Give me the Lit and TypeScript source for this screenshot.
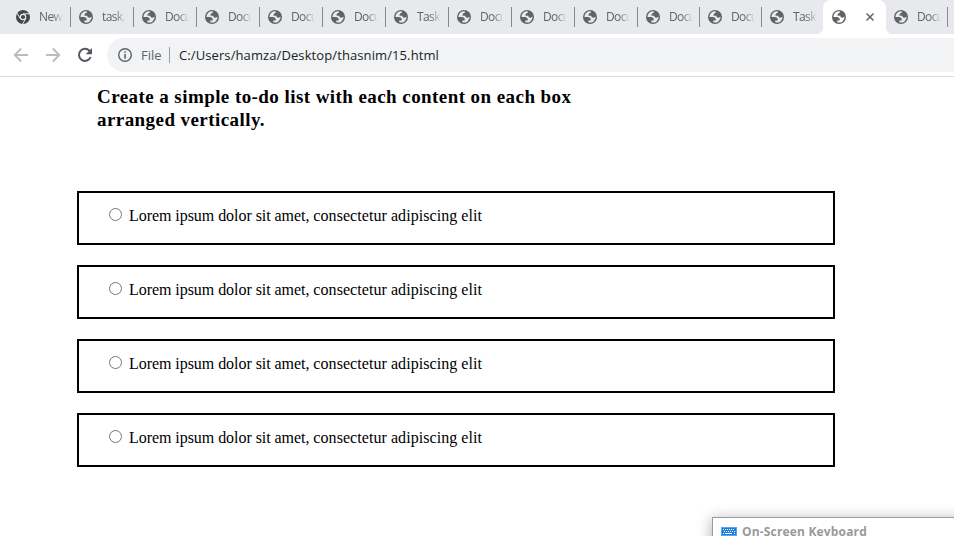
import { LitElement, html, css, svg } from "lit";
import { customElement } from "lit/decorators.js";
import { classMap } from "lit/directives/class-map.js";

type Tab = { title: string; kind?: "chrome"; active?: boolean; sep?: boolean; narrow?: boolean };

const TABS: Tab[] = [
  { title: "New Tab", kind: "chrome" },
  { title: "task.html", sep: true },
  { title: "Document", sep: true },
  { title: "Document", sep: true },
  { title: "Document", sep: true },
  { title: "Document", sep: true },
  { title: "Task 8", sep: true },
  { title: "Document", sep: true },
  { title: "Document", sep: true },
  { title: "Document", sep: true },
  { title: "Document", sep: true, narrow: true },
  { title: "Document", sep: true, narrow: true },
  { title: "Task 1", sep: true, narrow: true },
  { title: "", active: true, narrow: true },
  { title: "Document", narrow: true },
  { title: "", sep: true },
];

const globe = html`<svg class="fav" viewBox="0 0 14 14"><circle cx="7" cy="7" r="7" fill="#5f6368"/><path class="land" d="M1.4 7H4.5C6.9 7 8 8.2 7.7 10.6H5.3V12.3A5.6 5.6 0 0 0 12.6 6.6C12.1 7.4 11.4 7.7 10.5 7.7C9 7.7 8.3 7.1 8.3 5.8H5.6C5.4 3.9 6.1 2.9 7.6 2.9C7.6 2.2 7.9 1.8 8.2 1.5A5.6 5.6 0 0 0 1.4 7Z"/></svg>`;

const chrome = html`<svg class="fav" viewBox="0 0 14 14"><circle cx="7" cy="7" r="7" fill="#43464a"/><circle cx="7" cy="7" r="2.7" fill="#43464a" stroke="#e8e9ed" stroke-width="1.2"/><path d="M7 3.8h6.4M4.2 8.6 1 3.1M9.8 8.6 6.6 14" stroke="#e8e9ed" stroke-width="1" fill="none"/></svg>`;

@customElement("browser-tabs")
export class BrowserTabs extends LitElement {
  static styles = css`
    :host { display: flex; height: 34px; background: #e8e9ed; padding-left: 7px; overflow: hidden; box-sizing: border-box; }
    .tab { flex: none; width: 63px; height: 34px; box-sizing: border-box; padding-left: 9px; display: flex; align-items: center; position: relative; }
    .narrow { width: 62px; }
    .sep::before { content: ""; position: absolute; left: 0; top: 7px; width: 1px; height: 20px; background: #85888c; }
    .fav { width: 14px; height: 14px; flex: none; display: block; }
    .land { fill: #e8e9ed; }
    .active .land { fill: #fff; }
    .title { margin-left: 9px; width: 24px; overflow: hidden; white-space: nowrap; font: 12px/16px "Open Sans", "Noto Sans", sans-serif; letter-spacing: -0.6px; color: #5f6368;
      -webkit-mask-image: linear-gradient(to right, #000 55%, transparent 100%); mask-image: linear-gradient(to right, #000 55%, transparent 100%); }
    .active { background: #fff; border-radius: 8px 8px 0 0; width: 63px; margin-right: -1px; }
    .active::before, .active::after { content: ""; position: absolute; bottom: 0; width: 6px; height: 6px; }
    .active::before { left: -6px; background: radial-gradient(circle at 0 0, #e8e9ed 5.5px, #fff 6.2px); }
    .active::after { right: -6px; background: radial-gradient(circle at 100% 0, #e8e9ed 5.5px, #fff 6.2px); }
    .close { width: 8px; height: 8px; margin-left: 20px; }
  `;
  render() {
    return TABS.map((t, i) => html`<div class=${classMap({ tab: true, sep: !!t.sep, narrow: !!t.narrow, active: !!t.active })}>
      ${i === TABS.length - 1 ? "" : t.kind === "chrome" ? chrome : globe}
      ${t.active
        ? html`<svg class="close" viewBox="0 0 8 8"><path d="M.5.5 7.5 7.5M7.5.5.5 7.5" stroke="#5f6368" stroke-width="1.5"/></svg>`
        : html`<span class="title">${t.title}</span>`}
    </div>`);
  }
}

@customElement("browser-toolbar")
export class BrowserToolbar extends LitElement {
  static styles = css`
    :host { display: flex; align-items: center; height: 43px; box-sizing: border-box; border-bottom: 1px solid #dadce0; background: #fff; padding-left: 13px; overflow: hidden; font: 13px/18px "Open Sans", "Noto Sans", sans-serif; }
    .nav { width: 16px; height: 16px; margin-right: 16px; flex: none; }
    .box { flex: 1; height: 34px; margin-left: -2px; border-radius: 17px 0 0 17px; background: #f1f3f4; display: flex; align-items: center; padding-left: 11px; }
    .info { width: 14px; height: 14px; flex: none; }
    .file { margin-left: 9px; width: 28px; color: #5f6368; }
    .rule { width: 1px; height: 16px; background: #9a9da1; }
    .url { margin-left: 9px; color: #202124; letter-spacing: 0.1px; white-space: nowrap; }
  `;
  render() {
    return html`
      <svg class="nav" viewBox="0 0 16 16"><path d="M15 8H2M8.2 1.5 1.7 8l6.5 6.5" fill="none" stroke="#babcbe" stroke-width="1.8"/></svg>
      <svg class="nav" viewBox="0 0 16 16"><path d="M1 8h13M7.8 1.5 14.3 8l-6.5 6.5" fill="none" stroke="#babcbe" stroke-width="1.8"/></svg>
      <svg class="nav" viewBox="0 0 16 16"><path d="M13.6 10a6 6 0 1 1-1.2-6.2L14 5.4" fill="none" stroke="#55585d" stroke-width="2"/><path d="M15 1v6.3H8.7z" fill="#55585d"/></svg>
      <div class="box">
        <svg class="info" viewBox="0 0 14 14"><circle cx="7" cy="7" r="6.3" fill="none" stroke="#5f6368" stroke-width="1.4"/><path d="M6.2 6.1h1.6v4.6H6.2zM6.2 3.2h1.6v1.6H6.2z" fill="#5f6368"/></svg>
        <span class="file">File</span><span class="rule"></span>
        <span class="url">C:/Users/hamza/Desktop/thasnim/15.html</span>
      </div>`;
  }
}

@customElement("todo-page")
export class TodoPage extends LitElement {
  static styles = css`
    :host { display: block; padding: 8px 0 0 77px; font: 16px/18px "Liberation Serif", serif; color: #000; }
    h3 { margin: 0 0 60px 20px; width: 500px; font-size: 19px; line-height: 23px; letter-spacing: 0.43px; }
    .list { display: grid; gap: 20px; width: 758px; }
    .item { display: flex; align-items: flex-start; height: 54px; box-sizing: border-box; border: 2px solid #000; padding: 14px 0 0 30px; }
    .radio { appearance: none; width: 13px; height: 13px; margin: 1px 7px 0 0; border: 1px solid #767676; border-radius: 50%; background: #fff; }
    .label { white-space: nowrap; letter-spacing: 0.06px; }
    .lead { letter-spacing: -0.05px; }
  `;
  render() {
    return html`
      <h3>Create a simple to-do list with each content on each box arranged vertically.</h3>
      <div class="list">
        ${[1, 2, 3, 4].map(() => html`<label class="item"><input class="radio" type="radio" /><span class="label"><span class="lead">Lorem ipsum dolor sit amet, </span>consectetur adipiscing elit</span></label>`)}
      </div>`;
  }
}

@customElement("app-root")
export class AppRoot extends LitElement {
  static styles = css`
    :host { display: block; position: relative; width: 954px; height: 536px; overflow: hidden; background: #fff; }
    .osk { position: absolute; left: 712px; top: 517px; width: 300px; height: 60px; box-sizing: border-box; border: 1px solid #9c9c9c; background: #fff; box-shadow: 0 3px 14px rgba(0, 0, 0, 0.35); display: flex; align-items: flex-start; padding: 5px 0 0 8px; }
    .kb { width: 16px; height: 9px; margin: 4px 5px 0 0; flex: none; }
    .name { font: bold 12px/17px "Open Sans", "Noto Sans", sans-serif; letter-spacing: 0.17px; color: #999; white-space: nowrap; }
  `;
  render() {
    const keys = [2, 4, 6, 8, 10, 12].map((x) => svg`<path d=${`M${x} 2h1v1h-1zM${x + 1} 4h1v1h-1z`} fill="#fff"/>`);
    return html`
      <browser-tabs></browser-tabs>
      <browser-toolbar></browser-toolbar>
      <todo-page></todo-page>
      <div class="osk">
        <svg class="kb" viewBox="0 0 16 9"><rect x=".5" y=".5" width="15" height="8" fill="#1b7fdc" stroke="#5da3e6"/>${keys}<path d="M2 6h1v1H2zM4 6h7v1H4zM13 6h1v1h-1z" fill="#fff"/></svg>
        <span class="name">On-Screen Keyboard</span>
      </div>`;
  }
}
